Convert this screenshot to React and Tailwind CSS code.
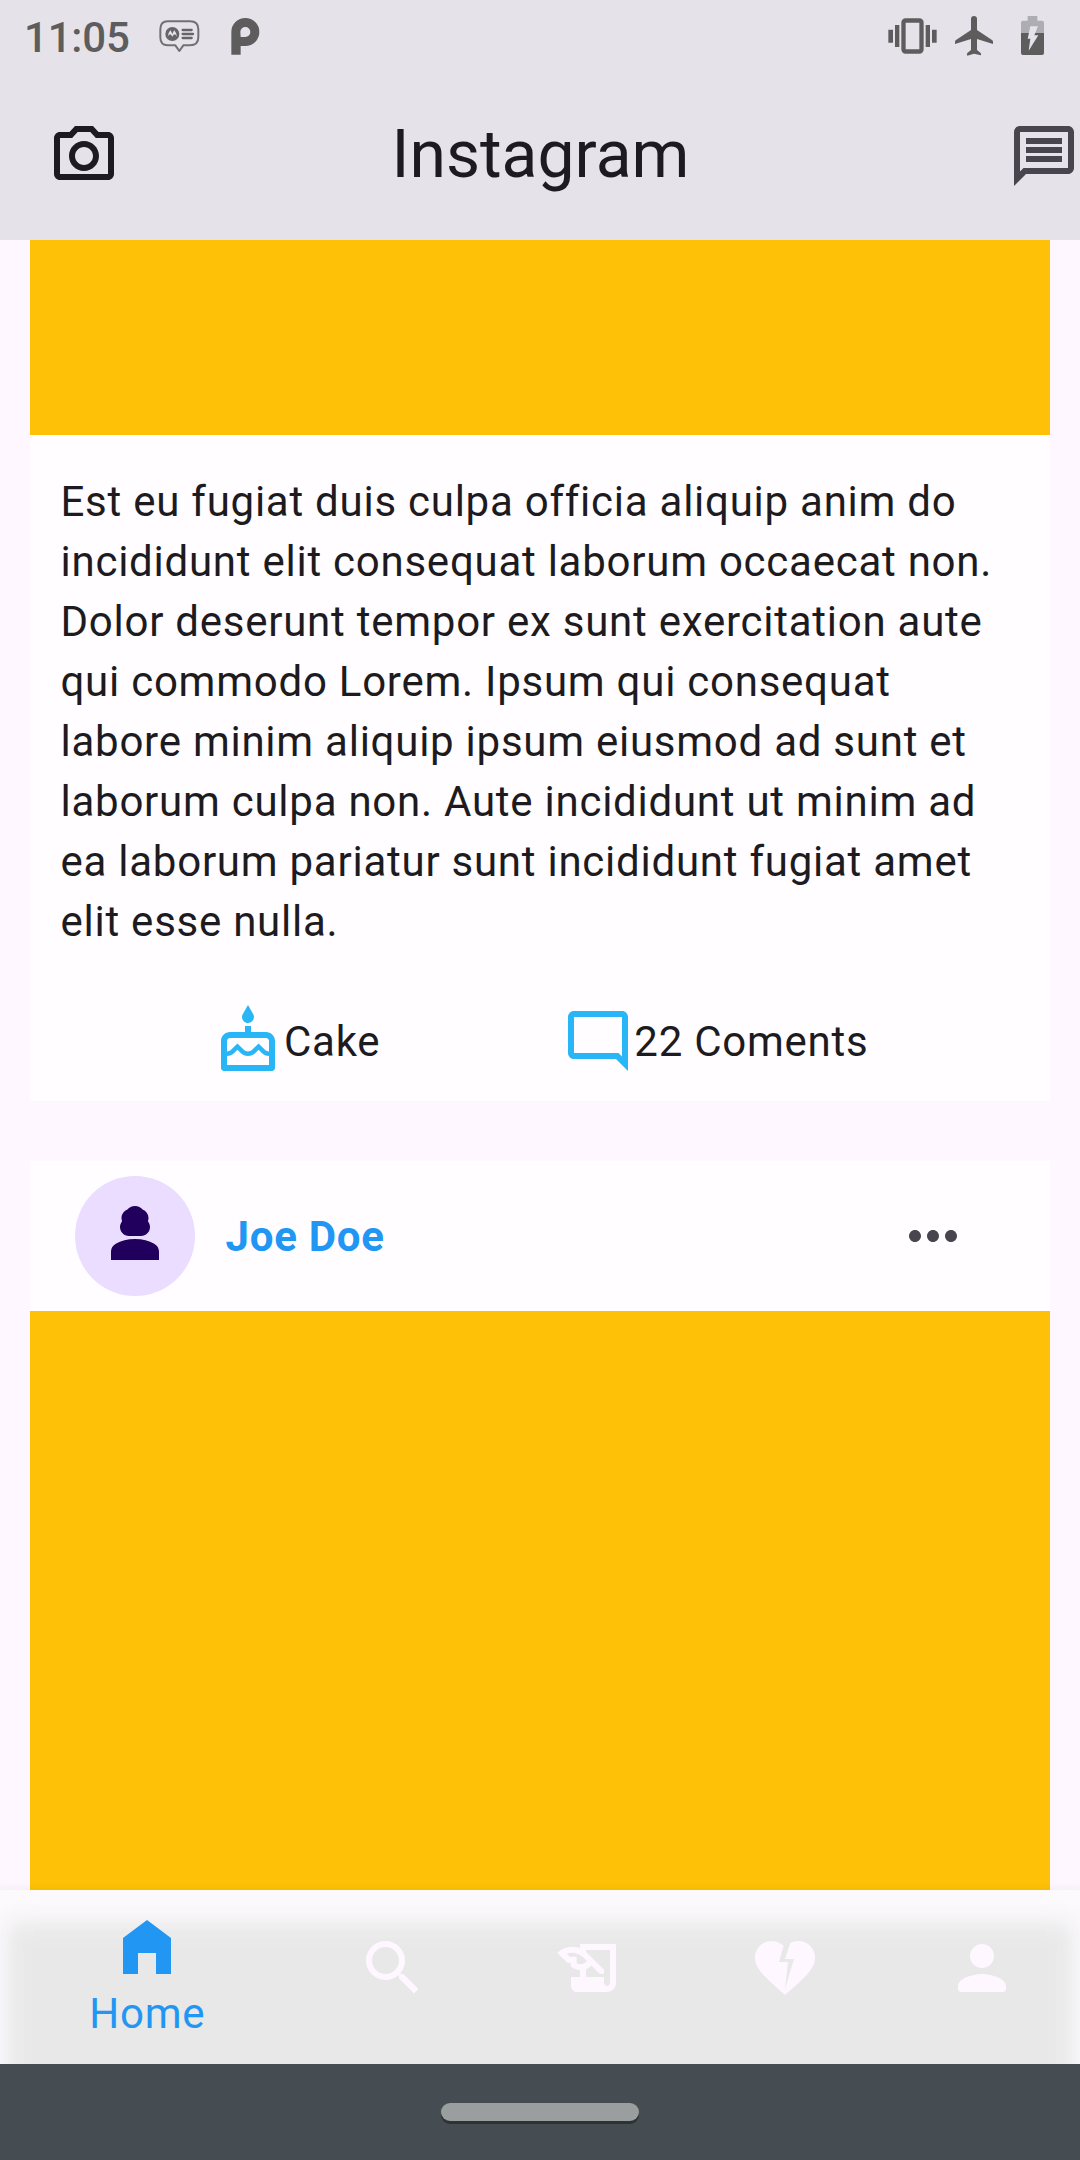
import React from "react";
import {
  MdOutlineCameraAlt,
  MdOutlineMessage,
  MdOutlineCake,
  MdOutlineModeComment,
  MdMoreHoriz,
  MdHomeFilled,
  MdSearch,
  MdHistoryEdu,
  MdHeartBroken,
} from "react-icons/md";

const BODY =
  "Est eu fugiat duis culpa officia aliquip anim do incididunt elit consequat laborum occaecat non. Dolor deserunt tempor ex sunt exercitation aute qui commodo Lorem. Ipsum qui consequat labore minim aliquip ipsum eiusmod ad sunt et laborum culpa non. Aute incididunt ut minim ad ea laborum pariatur sunt incididunt fugiat amet elit esse nulla.";

function MessageBubble() {
  return (
    <svg className="h-[33px] w-[41px]" viewBox="0 0 123 99" fill="none">
      <path
        d="M26 4h67q25 0 25 24v24q0 24-25 24H73L61 93 49 76H26Q4 76 4 52V28Q4 4 26 4z"
        stroke="#717073"
        strokeWidth="6"
        strokeLinejoin="round"
      />
      <circle cx="40" cy="42" r="21" fill="#656567" />
      <path d="M26 50q2-12 8-19 4 4 6 12 2-8 6-12 6 7 8 19-3-6-7-7-4 1-7 7-3-6-7-7-4 1-7 7z" fill="#e5e3e9" />
      <path d="M71 30h27M71 42h31M71 54h27" stroke="#656567" strokeWidth="7" strokeLinecap="round" />
    </svg>
  );
}

function ParkingBadge() {
  return (
    <svg className="h-[37px] w-[29px]" viewBox="0 0 87 111">
      <path
        fillRule="evenodd"
        fill="#5d5d5e"
        d="M1 110V42A42 42 0 1 1 43 84H29v26zM29 57H43A15 15 0 1 0 28 42z"
      />
    </svg>
  );
}

function Vibrate() {
  return (
    <svg className="h-[36px] w-[50px]" viewBox="0 0 150 108" fill="#5d5d5e">
      <path d="M1 35h14v39H1zM21 21h13v66H21zM113 21h13v66h-13zM132 35h14v39h-14z" />
      <rect x="46.500" y="7.500" width="54" height="93" rx="6" fill="none" stroke="#5d5d5e" strokeWidth="13" />
    </svg>
  );
}

function Airplane() {
  return (
    <svg className="h-[40px] w-[38px]" viewBox="525 48 114 120" fill="#5d5d5e">
      <path d="M573 57q0-9 9-9t9 9v33l45 30q3 2 3 6v6l-48-15v33l11 9q2 2 1 7l-21-5-20 6q-3-4 0-8l11-9v-33l-48 15v-6q0-4 3-6l45-30z" />
    </svg>
  );
}

function Battery() {
  return (
    <svg className="h-[39px] w-[23px]" viewBox="723 48 69 117">
      <path d="M723 99V68q0-6 6-6h14V48h29v14h14q6 0 6 6v31z" fill="#aeadb1" />
      <path d="M723 99h69v60q0 6-6 6h-57q-6 0-6-6z" fill="#5d5d5e" />
      <path d="M751 79h23l-11 27h12l-29 46 5-36h-8z" fill="#e5e3e9" />
    </svg>
  );
}

function AvatarPerson() {
  return (
    <svg className="size-[72px]" viewBox="0 0 24 24" fill="#21005d">
      <path d="M18.390 14.560C16.710 13.700 14.530 13 12 13s-4.710.7-6.390 1.560C4.610 15.070 4 16.100 4 17.220V20h16v-2.780c0-1.120-.61-2.150-1.610-2.660zM10 12h4c1.660 0 3-1.340 3-3 0-.73-.27-1.400-.71-1.920.13-.33.21-.7.210-1.080 0-1.250-.77-2.320-1.860-2.770C14 2.480 13.060 2 12 2s-2 .48-2.640 1.230C8.270 3.680 7.500 4.750 7.500 6c0 .38.08.75.210 1.080C7.270 7.600 7 8.270 7 9c0 1.660 1.340 3 3 3z" />
    </svg>
  );
}

function ProfileIcon({ className }) {
  return (
    <svg className={className} viewBox="0 0 24 24" fill="currentColor">
      <path d="M12 12c2.210 0 4-1.790 4-4s-1.790-4-4-4-4 1.790-4 4 1.790 4 4 4zm0 2c-2.670 0-8 1.340-8 4v1c0 .55.45 1 1 1h14c.55 0 1-.45 1-1v-1c0-2.660-5.330-4-8-4z" />
    </svg>
  );
}

function StatusBar() {
  return (
    <div className="flex h-[72px] items-start justify-between">
      <div className="flex">
        <span className="ml-[24px] mt-[8px] w-[135px] text-[42px] leading-[60px] font-medium tracking-[-0.2px] text-[#5d5d5e]">11:05</span>
        <div className="mt-[20px]"><MessageBubble /></div>
        <div className="ml-[31px] mt-[18px]"><ParkingBadge /></div>
      </div>
      <div className="flex pr-[36px]">
        <div className="mt-[18px]"><Vibrate /></div>
        <div className="ml-[17px] mt-[16px]"><Airplane /></div>
        <div className="ml-[28px] mt-[16px]"><Battery /></div>
      </div>
    </div>
  );
}

const TABS = [
  { name: "Search", Icon: MdSearch },
  { name: "Stories", Icon: MdHistoryEdu },
  { name: "Likes", Icon: MdHeartBroken },
  { name: "Profile", Icon: ProfileIcon },
];

function BottomNav() {
  return (
    <nav className="relative z-10 h-[174px] shrink-0 overflow-hidden bg-[#fcfafd]">
      <div className="absolute -bottom-[26px] left-[7px] right-[7px] top-[32px] bg-[#e8e8e8] blur-[12px]" />
      <div className="relative flex h-full">
        <div className="flex grow-[1.5] basis-0 flex-col items-center pt-[21px] text-[#2196f3]">
          <MdHomeFilled className="size-[72px] shrink-0" />
          <span className="mt-px text-[42px] leading-[60px] tracking-[0.75px]">Home</span>
        </div>
        {TABS.map(({ name, Icon }) => (
          <div key={name} aria-label={name} className="flex grow basis-0 justify-center pt-[42px] text-[#fef7ff]">
            <Icon className="size-[72px]" />
          </div>
        ))}
      </div>
    </nav>
  );
}

export default function App() {
  return (
    <div className="flex h-[2160px] w-[1080px] flex-col overflow-hidden bg-[#fef7ff] font-[Roboto,sans-serif] text-[#1d1b20]">
      <header className="h-[240px] shrink-0 bg-[#e5e3e9]">
        <StatusBar />
        <div className="flex h-[168px] items-center justify-between pl-[48px]">
          <MdOutlineCameraAlt className="size-[72px]" />
          <h1 className="mb-[2px] ml-[-47px] text-[66px] leading-[84px]">Instagram</h1>
          <MdOutlineMessage className="size-[72px] text-[#49454f]" />
        </div>
      </header>

      <main className="flex min-h-0 grow flex-col gap-[60px] overflow-hidden px-[30px]">
        <article className="h-[861px] shrink-0 bg-[#fffdff]">
          <div className="h-[195px] bg-[#ffc107]" />
          <p className="pl-[30.5px] pr-[29.5px] pt-[37px] text-[42px] leading-[60px] tracking-[0.75px]">{BODY}</p>
          <div className="mt-[53px] flex justify-evenly text-[42px] tracking-[0.75px]">
            <div className="flex items-center">
              <MdOutlineCake className="size-[72px] text-[#29b6f6]" />
              <span className="ml-[0.5px]">Cake</span>
            </div>
            <div className="flex items-center">
              <MdOutlineModeComment className="size-[72px] text-[#29b6f6]" />
              <span className="ml-[0.5px]">22 Coments</span>
            </div>
          </div>
        </article>

        <article className="flex grow flex-col bg-[#fffdff]">
          <div className="flex h-[150px] shrink-0 items-center pl-[45px] pr-[81px]">
            <div className="flex size-[120px] items-center justify-center rounded-full bg-[#eaddff]">
              <AvatarPerson />
            </div>
            <span className="ml-[30.5px] mt-[2px] grow text-[42px] font-bold leading-[60px] tracking-[0.75px] text-[#2196f3]">Joe Doe</span>
            <MdMoreHoriz className="size-[72px] text-[#49454f]" />
          </div>
          <div className="grow bg-[#ffc107]" />
        </article>
      </main>

      <div className="relative z-10 h-0 shadow-[0_0_7px_1px_rgba(0,0,0,0.12)]" />
      <BottomNav />

      <footer className="relative z-20 flex h-[96px] shrink-0 justify-center bg-[#454d52] pt-[39px]">
        <div className="h-[18px] w-[198px] rounded-full bg-[#9a9e9f] shadow-[0_3px_0_#2d3335]" />
      </footer>
    </div>
  );
}
